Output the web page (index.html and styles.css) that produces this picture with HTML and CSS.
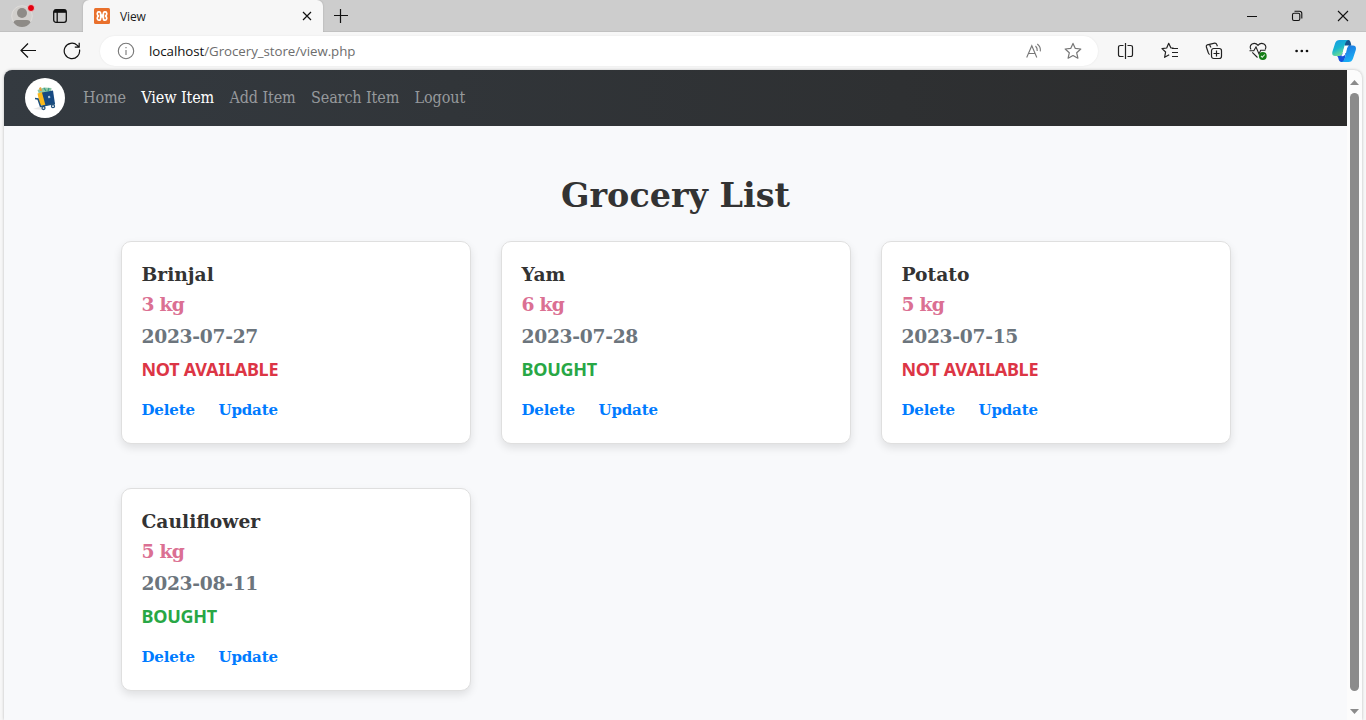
FILE: index.html
```html
<!DOCTYPE html>
<html lang="en">
<head>
<meta charset="utf-8">
<title>View</title>
<link rel="stylesheet" href="styles.css">
</head>
<body>
<header class="tabbar">
  <svg class="avatar" width="24" height="26" viewBox="0 0 24 26"><circle cx="11" cy="13" r="10.3" fill="#d1cfcc" stroke="#dedcda"/><circle cx="11" cy="10" r="5" fill="#8e8b87"/><path d="M2.5 19.5Q3 17 6 17H16Q19 17 19.5 19.5Q16 24 11 24Q6 24 2.5 19.5Z" fill="#8e8b87"/><circle cx="20" cy="5" r="3.5" fill="#e3000f" stroke="#e6dcdc" stroke-width=".8"/></svg>
  <svg class="workspaces" width="16" height="16" viewBox="0 0 16 16" fill="none" stroke="#111" stroke-width="1.3"><rect x="1.7" y="1.7" width="12.6" height="12.6" rx="2.3"/><path d="M2 3.3H14" stroke-width="3"/><path d="M5.2 4V14"/></svg>
  <div class="tab">
    <svg width="16" height="16" viewBox="0 0 16 16"><rect width="16" height="16" rx="1.5" fill="#e9702c"/><path d="M5.4 3.8H4.8C2.8 3.8 2.8 6.8 4.4 8C2.8 9.2 2.8 12.2 4.8 12.2H5.4C7 12.2 6.6 9.4 6.6 8.8H9.4C9.4 9.4 9 12.2 10.6 12.2H11.2C13.2 12.2 13.2 9.2 11.6 8C13.2 6.8 13.2 3.8 11.2 3.8H10.6C9 3.8 9.4 6.6 9.4 7.2H6.6C6.6 6.6 7 3.8 5.4 3.8Z" fill="none" stroke="#fff" stroke-width="1.7" stroke-linejoin="round"/></svg>
    <span class="tab-title">View</span>
    <svg width="10" height="10" viewBox="0 0 10 10" stroke="#111" stroke-width="1.2"><path d="M1 1L9 9M9 1L1 9"/></svg>
  </div>
  <svg class="newtab" width="14" height="14" viewBox="0 0 14 14" stroke="#111" stroke-width="1.2"><path d="M6.5 0V14M0 6.5H14"/></svg>
  <div class="window-buttons">
    <svg width="10" height="12" viewBox="0 0 10 12" stroke="#111"><path d="M0 6.5H10"/></svg>
    <svg width="12" height="12" viewBox="0 0 12 12" fill="none" stroke="#111" stroke-width="1.1"><rect x="1.5" y="3.2" width="7.3" height="7.3" rx="1.5"/><path d="M3.5 1.2H8.5Q10.8 1.2 10.8 3.5V8.5"/></svg>
    <svg width="12" height="12" viewBox="0 0 12 12" stroke="#111" stroke-width="1.1"><path d="M1 1L11 11M11 1L1 11"/></svg>
  </div>
</header>
<div class="toolbar">
  <svg class="back" width="16" height="16" viewBox="0 0 16 16" fill="none" stroke="#111" stroke-width="1.2"><path d="M16 7.5H1M8 .5L1 7.5L8 14.5"/></svg>
  <svg class="reload" width="18" height="18" viewBox="0 0 18 18" fill="none" stroke="#111" stroke-width="1.2"><path d="M16.5 7.5A7.7 7.7 0 1 1 14.3 3.4L16.2 5.2M16.2 .8V5.2H11.8"/></svg>
  <div class="address">
    <svg width="18" height="18" viewBox="0 0 18 18" fill="none" stroke="#777" stroke-width="1.1"><circle cx="9" cy="9" r="7.7"/><path d="M9 8V13M9 5V6.3"/></svg>
    <span class="url"><b>localhost</b>/Grocery_store/view.php</span>
    <svg class="read-aloud" width="16" height="16" viewBox="0 0 16 16" fill="none" stroke="#777" stroke-width="1.1"><path d="M.7 14.5L5.8 2.7L10.8 14.5M2.5 10.5H9M9.5 3Q11.5 4.8 11.2 8M11.3 1Q15 4 14.3 8.4"/></svg>
    <svg width="18" height="18" viewBox="0 0 18 18" fill="none" stroke="#777" stroke-width="1.2" stroke-linejoin="round"><path d="M9 1.4L11.3 6.4L16.8 7L12.7 10.8L13.9 16.2L9 13.5L4.1 16.2L5.3 10.8L1.2 7L6.7 6.4Z"/></svg>
  </div>
  <div class="tools">
    <svg width="18" height="18" viewBox="0 0 18 18" fill="none" stroke="#222" stroke-width="1.2"><path d="M6.5 3.5H3.5Q1.5 3.5 1.5 5.3V12.7Q1.5 14.5 3.5 14.5H6.5M10.5 3.5H13.5Q15.5 3.5 15.5 5.3V12.7Q15.5 14.5 13.5 14.5H10.5M8.5 1V17"/></svg>
    <svg width="18" height="18" viewBox="0 0 18 18" fill="none" stroke="#222" stroke-width="1.2" stroke-linejoin="round"><path d="M12.5 6L9.8 5.8L7.7 1.3L5.7 6L1 6.6L4.6 10L3.6 15.3L8.2 12.7M11 6.5H17M11 10.5H17M11 14.5H17"/></svg>
    <svg width="18" height="18" viewBox="0 0 18 18" fill="none" stroke="#222" stroke-width="1.2"><rect x="6.5" y="6.5" width="10" height="10" rx="2.2"/><path d="M11.5 8.5V14.5M8.5 11.5H14.5M4.7 12.5Q3.5 12 3.2 10.5L1.3 4.8Q1 3.3 2.3 2.8L9.7 1.1Q11.3 1 11.8 2.6L12.4 4.3M4.8 2.2Q4.8 4 6 5.5"/></svg>
    <svg width="18" height="18" viewBox="0 0 18 18" fill="none" stroke="#222" stroke-width="1.1"><path d="M2 7.5Q0 4 3 2Q6.5 .2 9 3.4Q11.5 .2 15 2Q18 4 16.2 7.5M3.3 10.3L8.5 15.5M.5 8.8H4.8L7 5L10 12L11.7 8.3H16.5"/><circle cx="13.8" cy="14" r="3.9" fill="#147d16" stroke="none"/><path d="M12 14L13.3 15.2L15.8 12.5" stroke="#d8edd8"/></svg>
    <svg width="18" height="18" viewBox="0 0 18 18" fill="#111"><circle cx="3.6" cy="9" r="1.35"/><circle cx="8.8" cy="9" r="1.35"/><circle cx="14" cy="9" r="1.35"/></svg>
  </div>
  <svg class="copilot" width="24" height="24" viewBox="0 0 24 24"><defs><linearGradient id="ca" x2=".5" y2="1"><stop stop-color="#1597e7"/><stop offset=".55" stop-color="#19b6cf"/><stop offset="1" stop-color="#7be08a"/></linearGradient><linearGradient id="cb" x2=".4" y2="1"><stop stop-color="#1d6fdc"/><stop offset="1" stop-color="#19aef5"/></linearGradient></defs><path d="M12.5 1H16.5Q18 1 18.5 3L19.4 6.5L14 8L11 3Z" fill="#14558f"/><path d="M7.5 1H16Q14 1.5 13.2 4.5L10.5 14.5Q9.7 17 7 17H3Q-.5 17 .4 12.7L3.2 4Q4.3 1 7.5 1Z" fill="url(#ca)"/><path d="M5 17H7Q9.7 17 10.5 14L14 14L12 23H9.5Q7 23 6.3 19Q6 17.5 5 17Z" fill="#1652dc"/><path d="M17 6.5H21Q24.7 6.8 23.8 11L21 19.5Q19.8 23 16.5 23H10Q12.3 21.8 13 18.5L15 9.4Q15.5 7 17 6.5Z" fill="url(#cb)"/><path d="M13.5 6.5H17Q15.2 7.5 14.5 10L12.8 16Q12 17.5 9 17Q10 16.5 10.5 14.5L12 9Q12.4 7 13.5 6.5Z" fill="#fff"/></svg>
</div>
<div class="viewport">
  <div class="page">
    <nav class="navbar">
      <svg class="brand" width="40" height="40" viewBox="0 0 40 40"><circle cx="20" cy="20" r="20" fill="#fff"/><path d="M8 31L17 28L18 32Z" fill="#e8e8e8"/><path d="M12.5 12L19 9.5L26.5 10L26 14L14 16Z" fill="#8fc9a6"/><path d="M14 10L16 9L17 13H15Z" fill="#e6a33d"/><path d="M19 10L21 13M24 10L23 13" stroke="#3d9c86" stroke-width="1.3"/><path d="M12.5 15.5L18 14L21 27L15 27.5Z" fill="#fbb91b"/><path d="M17 14.5L28 12.5L30 26L20.5 27.5Z" fill="#174a82"/><path d="M23 18L25 17.7L25.3 20L23.2 20.3Z" fill="#a9c3db"/><path d="M10 20.5L13 21L15.5 28.5L30 25.5" fill="none" stroke="#20517d" stroke-width="1.5"/><circle cx="18.5" cy="30" r="1.5" fill="#fff" stroke="#20517d" stroke-width="1.3"/><circle cx="28" cy="28.2" r="1.5" fill="#fff" stroke="#20517d" stroke-width="1.3"/></svg>
      <a class="nav-link">Home</a>
      <a class="nav-link active">View Item</a>
      <a class="nav-link">Add Item</a>
      <a class="nav-link">Search Item</a>
      <a class="nav-link">Logout</a>
    </nav>
    <main class="content">
      <h1 class="title">Grocery List</h1>
      <div class="cards">
        <article class="card">
          <h2 class="name">Brinjal</h2>
          <p class="qty">3 kg</p>
          <p class="date">2023-07-27</p>
          <p class="status missing">NOT AVAILABLE</p>
          <div class="links"><a class="delete">Delete</a><a>Update</a></div>
        </article>
        <article class="card">
          <h2 class="name">Yam</h2>
          <p class="qty">6 kg</p>
          <p class="date">2023-07-28</p>
          <p class="status bought">BOUGHT</p>
          <div class="links"><a class="delete">Delete</a><a>Update</a></div>
        </article>
        <article class="card">
          <h2 class="name">Potato</h2>
          <p class="qty">5 kg</p>
          <p class="date">2023-07-15</p>
          <p class="status missing">NOT AVAILABLE</p>
          <div class="links"><a class="delete">Delete</a><a>Update</a></div>
        </article>
        <article class="card">
          <h2 class="name">Cauliflower</h2>
          <p class="qty">5 kg</p>
          <p class="date">2023-08-11</p>
          <p class="status bought">BOUGHT</p>
          <div class="links"><a class="delete">Delete</a><a>Update</a></div>
        </article>
      </div>
    </main>
  </div>
  <div class="scrollbar">
    <svg width="9" height="5" viewBox="0 0 9 5"><path d="M0 5L4.5 0L9 5Z" fill="#8b8b8b"/></svg>
    <div class="thumb"></div>
    <svg width="9" height="5" viewBox="0 0 9 5"><path d="M0 0L4.5 5L9 0Z" fill="#8b8b8b"/></svg>
  </div>
</div>
</body>
</html>
```
FILE: styles.css
```css
* { box-sizing: border-box; }
body { margin: 0; width: 1366px; height: 720px; overflow: hidden; display: flex; flex-direction: column; background: #f7f7f7; font-family: "Open Sans", sans-serif; }
h1, h2, p { margin: 0; }
svg { flex: none; display: block; }

.tabbar { flex: none; height: 32px; display: flex; align-items: center; background: #cdcdcd; border-bottom: 1px solid #c1c1c1; padding-left: 11px; }
.avatar { margin-top: 1px; }
.workspaces { margin-left: 17px; }
.tab { width: 240px; height: 32px; align-self: flex-start; margin-left: 15px; padding: 0 11px; display: flex; align-items: center; background: #f7f7f7; border-radius: 6px 6px 0 0; box-shadow: 0 0 2px rgba(0,0,0,.2); clip-path: inset(0 -3px 0 -3px); }
.tab-title { flex: 1; margin-left: 10px; font-size: 12px; letter-spacing: -.15px; color: #1b1b1b; }
.newtab { margin-left: 11px; }
.window-buttons { margin-left: auto; display: flex; gap: 34px; padding-right: 17px; }

.toolbar { flex: none; height: 38px; display: flex; align-items: center; padding: 0 9px 0 20px; }
.reload { margin-left: 27px; }
.address { width: 998px; height: 30px; margin-left: 19px; padding: 0 16px 0 17px; display: flex; align-items: center; background: #fff; border-radius: 15px; box-shadow: 0 0 2px rgba(0,0,0,.08); }
.url { flex: 1; margin-left: 14px; font-size: 13.3px; letter-spacing: -.05px; color: #6d6d6d; }
.url b { font-weight: 400; color: #111; }
.read-aloud { margin-right: 22px; }
.tools { display: flex; gap: 26px; margin-left: 19px; }
.copilot { margin-left: auto; margin-right: 1px; }

.viewport { flex: 1; width: 1358px; margin-left: 4px; display: flex; border-radius: 8px 8px 0 0; overflow: hidden; background: #fcfcfc; box-shadow: 0 0 3px rgba(0,0,0,.25); }
.page { width: 1343px; background: #f8f9fb; }
.navbar { height: 56px; display: flex; align-items: center; padding-left: 21px; background: linear-gradient(to right, #343a40, #2b2b2b); }
.brand { margin-right: 18px; }
.nav-link { margin-right: 15.3px; font: 16px/24px "DejaVu Serif Condensed", "DejaVu Serif", serif; font-stretch: condensed; letter-spacing: -.1px; color: #96999c; }
.nav-link.active { color: #fff; }

.content { width: 1110px; margin: 0 auto; padding-top: 45px; }
.title { height: 50px; font: bold 33.4px/50px "DejaVu Serif", serif; text-align: center; color: #333; }
.cards { display: grid; grid-template-columns: repeat(3, 350px); column-gap: 30px; row-gap: 44px; padding-top: 20px; }
.card { height: 203px; padding: 20px; background: #fff; border: 1px solid #dfdfdf; border-radius: 10px; box-shadow: 0 4px 8px rgba(0,0,0,.1); }
.name, .qty, .date { font: bold 18.7px/24px "DejaVu Serif", serif; color: #333; }
.qty { margin-top: 6px; letter-spacing: -.7px; color: #db7093; }
.date { margin-top: 8px; letter-spacing: -.3px; color: #6c757d; }
.status { margin-top: 9px; font: bold 18px/24px "Noto Sans", sans-serif; letter-spacing: -.27px; }
.missing { color: #dc3545; }
.bought { color: #28a745; }
.links { margin-top: 17px; display: flex; font: bold 15px/25px "DejaVu Serif", serif; letter-spacing: -.15px; color: #007bff; }
.delete { width: 77px; }

.scrollbar { width: 15px; display: flex; flex-direction: column; align-items: center; padding-top: 10px; }
.thumb { width: 9px; height: 598px; margin: 8px 0 18px; border-radius: 4.5px; background: #8b8b8b; }
```
